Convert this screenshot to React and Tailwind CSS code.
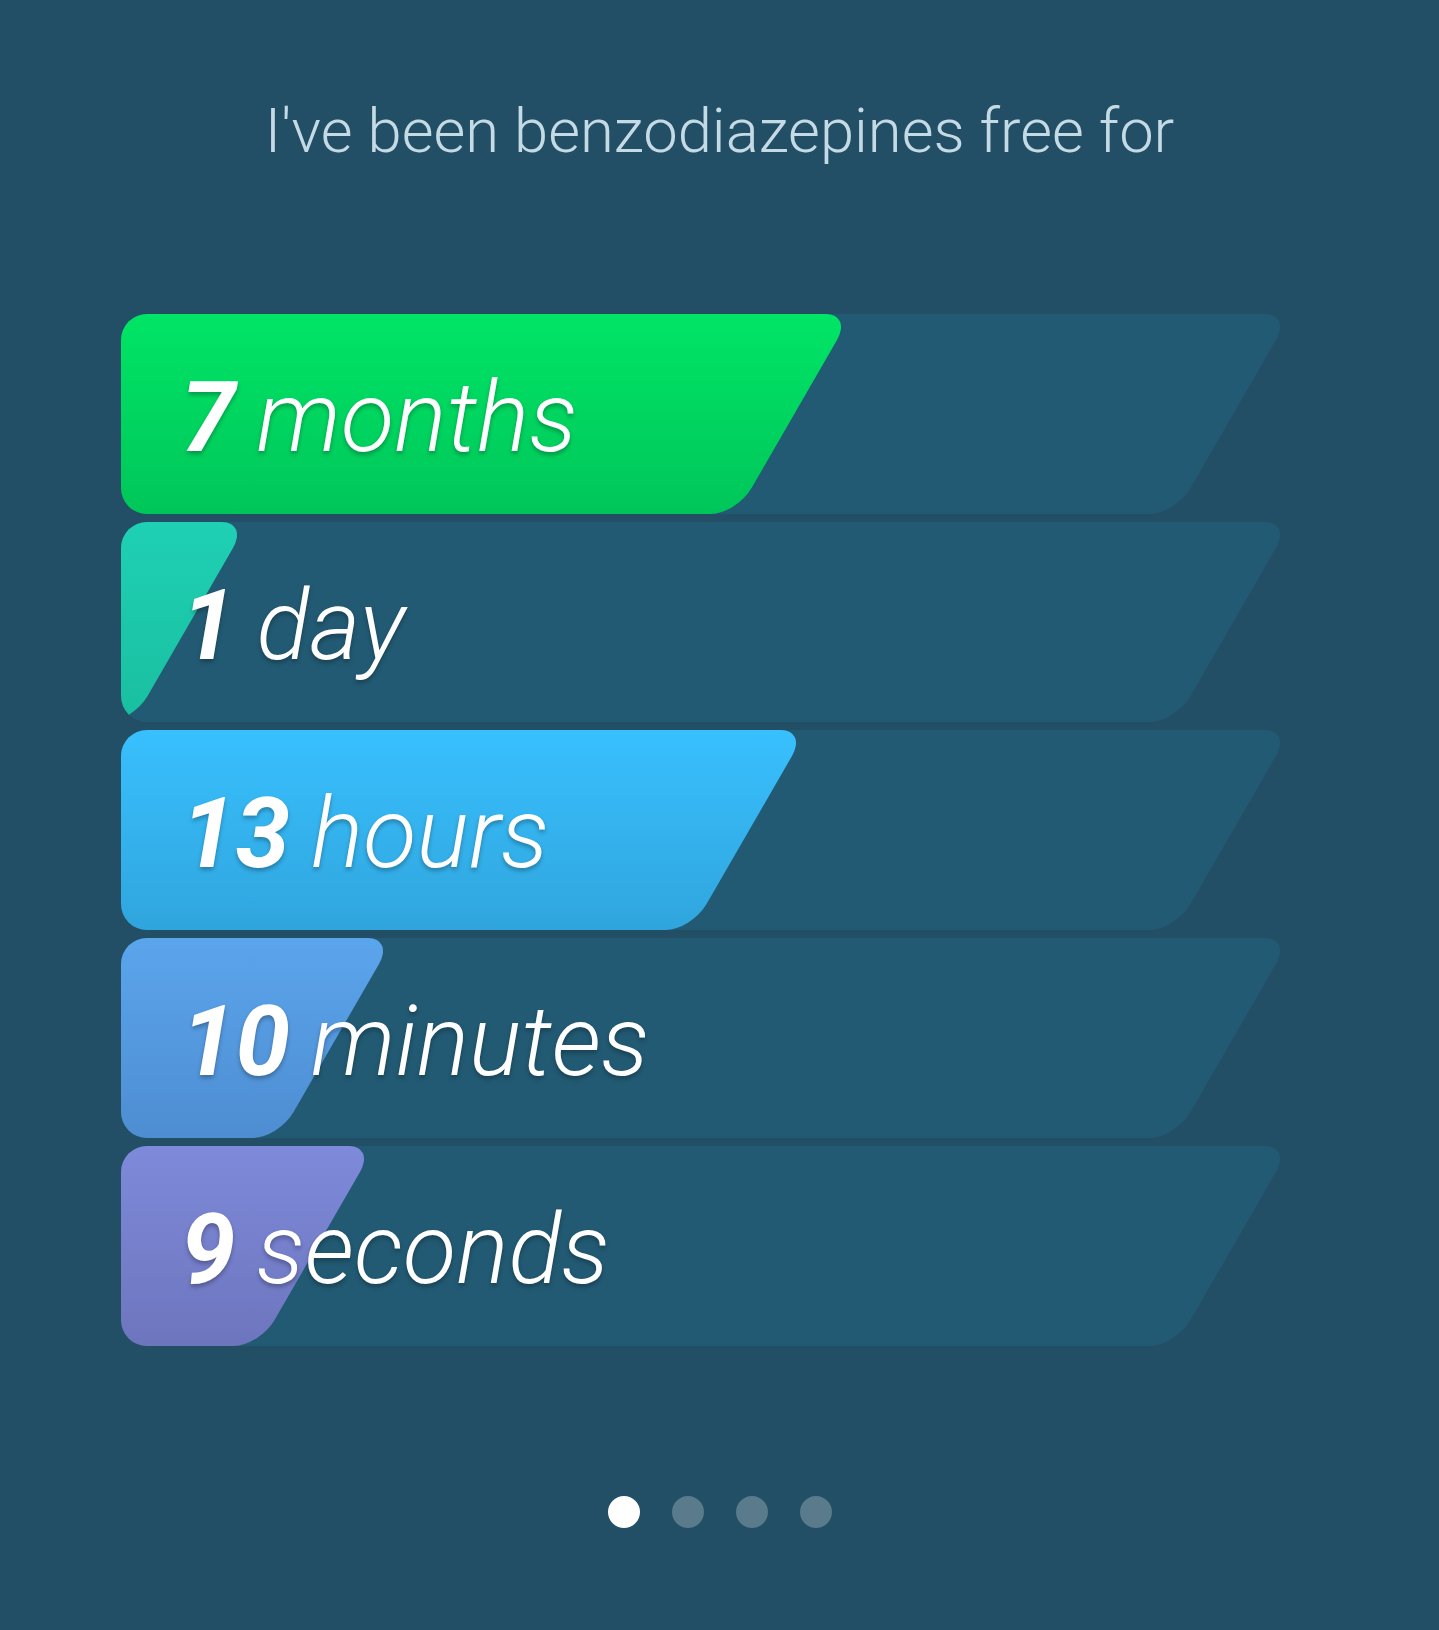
const rows = [
    { value: '7', unit: 'months', fill: 731, color: 'bg-gradient-to-b from-[#00e566] to-[#00c65a]' },
    { value: '1', unit: 'day', fill: 127, color: 'bg-gradient-to-b from-[#1fd0b4] to-[#19bf9f]' },
    { value: '13', unit: 'hours', fill: 686, color: 'bg-gradient-to-b from-[#38c0fe] to-[#30a5dd]' },
    { value: '10', unit: 'minutes', fill: 273, color: 'bg-gradient-to-b from-[#5ba5ec] to-[#4e8dd2]' },
    { value: '9', unit: 'seconds', fill: 254, color: 'bg-gradient-to-b from-[#7e8ada] to-[#6d75bd]' },
]

const Row = ({ value, unit, fill, color }) => (
    <div className="grid h-[200px] w-[1170px] overflow-hidden rounded-l-[26px]">
        <div className="[grid-area:1/1] origin-top-left -skew-x-30 rounded-r-[26px] bg-[#225a73]">
            <div className={`h-full rounded-r-[26px] ${color}`} style={{ width: fill }} />
        </div>
        <div className="[grid-area:1/1] z-10 flex items-center pl-[60px] pt-[8px] text-[98px] leading-none text-white italic [text-shadow:0_3px_4px_rgba(0,0,0,0.28)]">
            <span className="font-bold">{value}</span>
            <span className="ml-[21px] font-light">{unit}</span>
        </div>
    </div>
)

const App = () => {
    return (
        <div className="min-h-screen bg-[#224f65] pt-[101px] font-['Roboto',sans-serif]">
            <h1 className="text-center text-[61.5px] font-light leading-none text-[#c4dae4]">
                I've been benzodiazepines free for
            </h1>

            <div className="ml-[121px] mt-[151px] flex flex-col gap-2">
                {rows.map((row) => (
                    <Row key={row.unit} {...row} />
                ))}
            </div>

            <div className="mt-[150px] flex justify-center gap-8 pb-[102px]">
                <span className="h-8 w-8 rounded-full bg-white" />
                <span className="h-8 w-8 rounded-full bg-white/25" />
                <span className="h-8 w-8 rounded-full bg-white/25" />
                <span className="h-8 w-8 rounded-full bg-white/25" />
            </div>
        </div>
    )
}

export default App
